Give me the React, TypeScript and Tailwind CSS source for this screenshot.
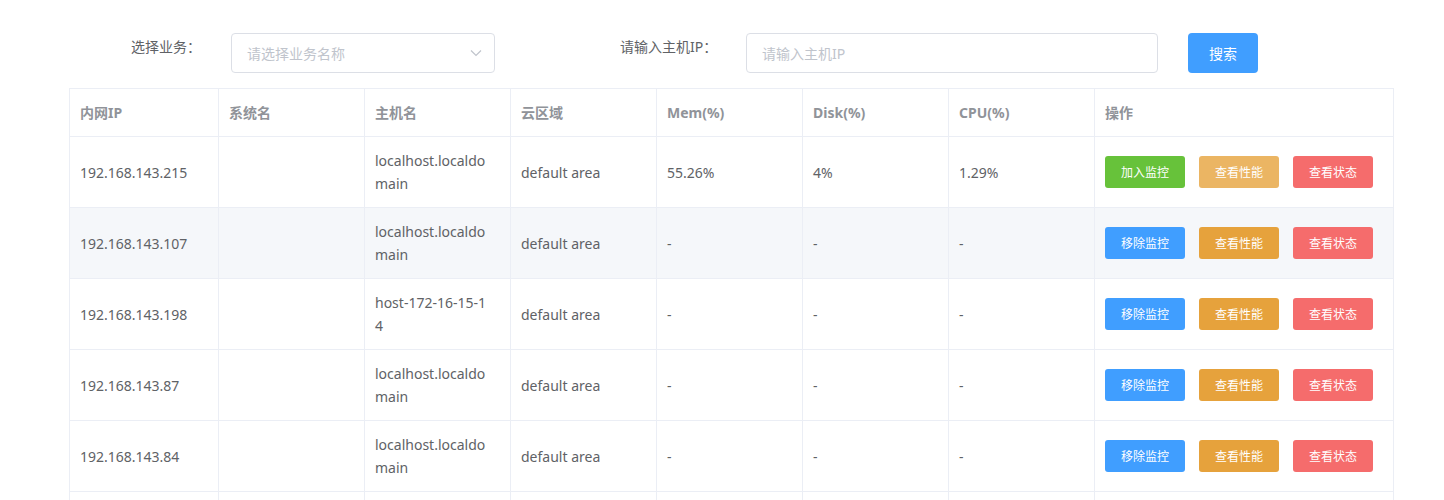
import React from "react"

const rows = [
  { ip: "192.168.143.215", host: "localhost.localdomain", mem: "55.26%", disk: "4%", cpu: "1.29%", added: true },
  { ip: "192.168.143.107", host: "localhost.localdomain", mem: "-", disk: "-", cpu: "-", added: false, hover: true },
  { ip: "192.168.143.198", host: "host-172-16-15-14", mem: "-", disk: "-", cpu: "-", added: false },
  { ip: "192.168.143.87", host: "localhost.localdomain", mem: "-", disk: "-", cpu: "-", added: false },
  { ip: "192.168.143.84", host: "localhost.localdomain", mem: "-", disk: "-", cpu: "-", added: false },
  { ip: "192.168.143.83", host: "localhost.localdomain", mem: "-", disk: "-", cpu: "-", added: false },
]

const headers = ["内网IP", "系统名", "主机名", "云区域", "Mem(%)", "Disk(%)", "CPU(%)", "操作"]
const widths = [149, 146, 146, 146, 146, 146, 146, 299]

const cellCls = "border border-[#EBEEF5] py-3 pl-[10px] pr-[10px] align-middle leading-[23px]"

export default function App() {
  return (
    <div
      className="w-[1444px] h-[500px] overflow-hidden bg-white text-[14px] text-[#606266]"
      style={{ fontFamily: '"Noto Sans", "Noto Sans CJK SC", sans-serif' }}
    >
      {/* 搜索栏 */}
      <div className="flex items-start pt-[33px] pl-[131px]">
        <div className="w-[100px] pt-[4px] leading-5">选择业务：</div>
        <div className="w-[264px] h-10 border border-[#DCDFE6] rounded-[4px] flex items-center justify-between pl-[15px] pr-[12px]">
          <span className="text-[#C0C4CC]">请选择业务名称</span>
          <svg width="12" height="8" viewBox="0 0 12 8" fill="none">
            <polyline points="1,1.5 6,6.5 11,1.5" stroke="#C0C4CC" strokeWidth="1.2" />
          </svg>
        </div>
        <div className="ml-[125px] w-[126px] pt-[4px] leading-5">请输入主机IP：</div>
        <div className="w-[412px] h-10 border border-[#DCDFE6] rounded-[4px] flex items-center pl-[15px]">
          <span className="text-[#C0C4CC]">请输入主机IP</span>
        </div>
        <button className="ml-[30px] w-[70px] h-10 rounded-[4px] bg-[#409EFF] text-white text-[14px]">
          搜索
        </button>
      </div>

      {/* 表格 */}
      <div className="pl-[69px] mt-[15px]">
        <table className="table-fixed border-collapse w-[1324px]">
          <colgroup>
            {widths.map((w, i) => (
              <col key={i} style={{ width: w }} />
            ))}
          </colgroup>
          <thead>
            <tr>
              {headers.map((h) => (
                <th key={h} className={`${cellCls} text-left font-bold text-[#909399]`}>
                  {h}
                </th>
              ))}
            </tr>
          </thead>
          <tbody>
            {rows.map((r) => (
              <tr key={r.ip} className={r.hover ? "bg-[#F5F7FA]" : "bg-white"}>
                <td className={cellCls}>{r.ip}</td>
                <td className={cellCls}></td>
                <td className={cellCls}>
                  <div className="w-[114px] break-all">{r.host}</div>
                </td>
                <td className={cellCls}>default area</td>
                <td className={cellCls}>{r.mem}</td>
                <td className={cellCls}>{r.disk}</td>
                <td className={cellCls}>{r.cpu}</td>
                <td className={cellCls}>
                  <div className="flex gap-[14px]">
                    {r.added ? (
                      <button className="w-[80px] h-8 rounded-[3px] bg-[#67C23A] text-white text-[12px]">加入监控</button>
                    ) : (
                      <button className="w-[80px] h-8 rounded-[3px] bg-[#409EFF] text-white text-[12px]">移除监控</button>
                    )}
                    <button
                      className={`w-[80px] h-8 rounded-[3px] text-white text-[12px] ${
                        r.added ? "bg-[#EBB563]" : "bg-[#E6A23C]"
                      }`}
                    >
                      查看性能
                    </button>
                    <button className="w-[80px] h-8 rounded-[3px] bg-[#F56C6C] text-white text-[12px]">查看状态</button>
                  </div>
                </td>
              </tr>
            ))}
          </tbody>
        </table>
      </div>
    </div>
  )
}
